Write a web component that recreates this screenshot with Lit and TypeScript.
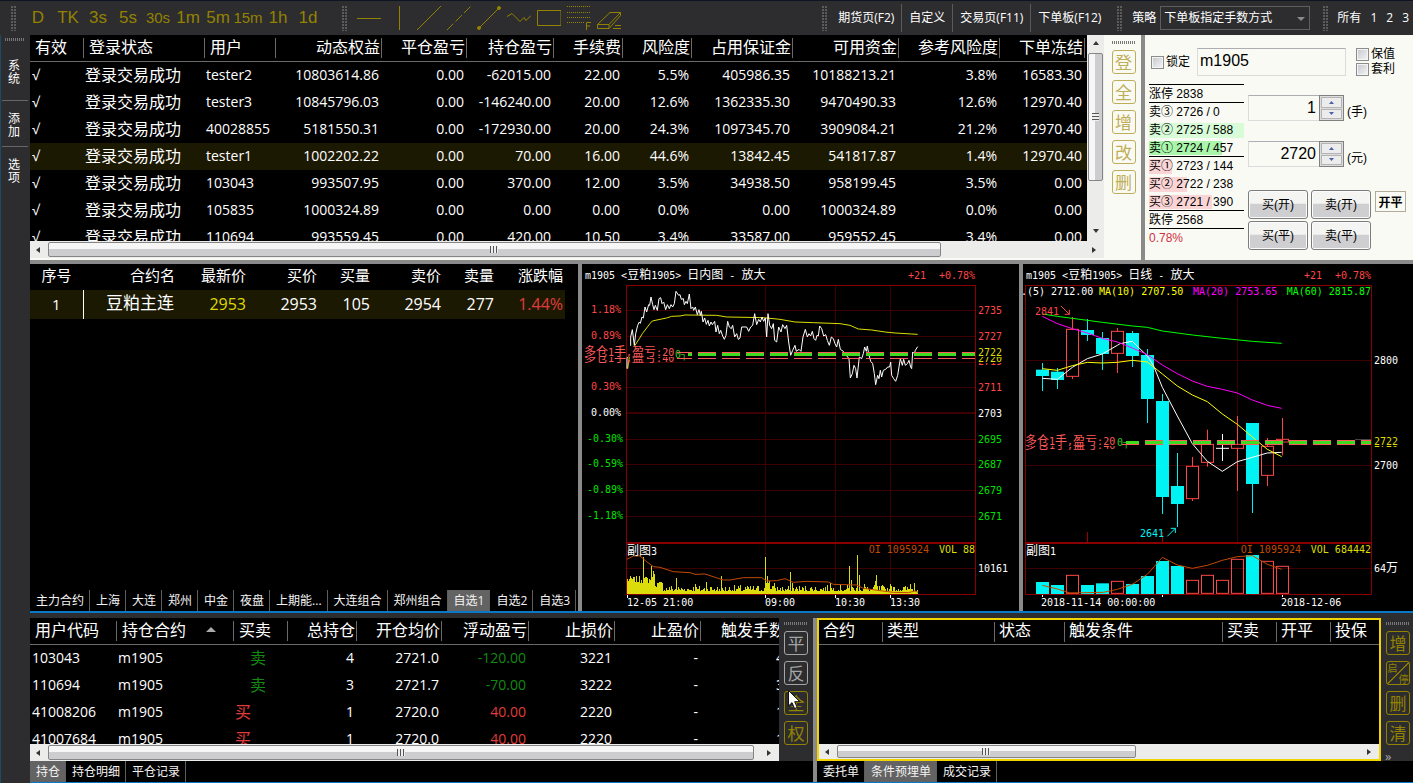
import { LitElement, html, svg, css, nothing } from "lit";
import { customElement, property } from "lit/decorators.js";
import { classMap } from "lit/directives/class-map.js";

const UI_FONT = css`"Open Sans", "Noto Sans CJK SC", sans-serif`;

const gridStyles = css`
  table { border-collapse: collapse; table-layout: fixed; width: 100%; color: #fff; }
  th, td { padding: 0; font-weight: 400; overflow: hidden; white-space: nowrap; text-align: left; }
  .num { text-align: right; }
  .red { color: #e03c3c; }
  .green { color: #128a12; }
  .yellow { color: #ded800; }
`;

interface Column {
  title: string;
  width?: number;
  num?: boolean;
  sorted?: boolean;
}

type Cell = string | { text: string; tone?: string; indent?: boolean };

/* Data grid with separated header cells, used for accounts, positions and conditional orders. */
@customElement("data-grid")
class DataGrid extends LitElement {
  static styles = [gridStyles, css`
    :host { display: block; overflow: hidden; background: #000; min-width: 0; font-family: ${UI_FONT}; }
    thead tr { height: 26px; }
    :host([compact]) thead tr { height: 24px; }
    thead { border-bottom: 1px solid #6a6a6a; }
    th { font-size: 16px; line-height: 18px; }
    .head { display: flex; align-items: center; justify-content: space-between; box-sizing: border-box; height: 20px; padding: 0 1px 2px 5px; border-right: 1px solid #6a6a6a; }
    :host([compact]) .head { padding: 0 1px 4px 4px; }
    .num .head { justify-content: flex-end; }
    .last .head { border-right-color: transparent; }
    .sort { width: 0; height: 0; margin-right: 16px; border: 5px solid transparent; border-top: 0; border-bottom-color: #aaa; }
    tbody tr { height: 27px; }
    td { font-size: 14px; line-height: 26px; height: 27px; padding: 0 3px 0 1px; }
    td:first-child { padding-left: 2px; }
    .cjk { font-size: 16px; }
    .indent { padding-left: 16px; }
    .selected { background: #1c1903; }
  `];
  @property({ attribute: false }) columns: Column[] = [];
  @property({ attribute: false }) rows: Cell[][] = [];
  @property({ type: Number }) selected = -1;
  @property({ type: Boolean, reflect: true }) compact = false;

  render() {
    return html`<table>
      <colgroup>${this.columns.map(c => html`<col width=${c.width ?? nothing}>`)}</colgroup>
      <thead><tr>${this.columns.map(c => html`
        <th scope="col" class=${classMap({ num: !!c.num, last: !c.width })}>
          <div class="head">${c.title}${c.sorted ? html`<span class="sort"></span>` : nothing}</div>
        </th>`)}</tr></thead>
      <tbody>${this.rows.map((r, i) => html`<tr class=${classMap({ selected: i === this.selected })}>
        ${r.map((cell, j) => {
          const c = typeof cell === "string" ? { text: cell } : cell as any;
          const cjk = /[\u4e00-\u9fff]/.test(c.text);
          return html`<td class=${classMap({ num: !!this.columns[j].num, cjk, indent: !!c.indent, red: c.tone === "red", green: c.tone === "green" })}>${c.text}</td>`;
        })}</tr>`)}</tbody>
    </table>`;
  }
}

/* Window-style scroll bar: len is the thumb's share of the track, in percent. */
@customElement("scroll-bar")
class ScrollBar extends LitElement {
  static styles = css`
    :host { display: flex; background: #ececea; flex: none; height: 17px; }
    :host([vertical]) { flex-direction: column; width: 17px; height: auto; }
    .arrow { border: 0; padding: 0; background: none; width: 18px; height: 100%; display: flex; align-items: center; justify-content: center; flex: none; }
    :host([vertical]) .arrow { width: 100%; height: 18px; }
    .track { flex: 1; display: flex; min-width: 0; min-height: 0; }
    :host([vertical]) .track { flex-direction: column; }
    .thumb { box-sizing: border-box; border: 1px solid #858585; border-radius: 2px; margin: 1px 0; display: flex; align-items: center; justify-content: center; background: linear-gradient(#f6f6f6 0 45%, #cdcdcf 50% 100%); }
    :host([vertical]) .thumb { margin: 0 1px; background: linear-gradient(90deg, #f6f6f6 0 45%, #cdcdcf 50% 100%); }
    .ribs { width: 8px; height: 7px; background: repeating-linear-gradient(90deg, #555 0 1px, #eee 1px 3px); }
    :host([vertical]) .ribs { width: 7px; height: 8px; background: repeating-linear-gradient(#555 0 1px, #eee 1px 3px); }
  `;
  @property({ type: Boolean, reflect: true }) vertical = false;
  @property({ type: Number }) len = 50;

  render() {
    const [a, b] = this.vertical ? ["M0 4 3 0 6 4Z", "M0 0 3 4 6 0Z"] : ["M4 0 0 3 4 6Z", "M0 0 4 3 0 6Z"];
    const arrow = (d: string, label: string) => html`<button class="arrow" aria-label=${label}>
      <svg width="6" height="6" viewBox="0 0 6 6"><path d=${d} fill="#333" /></svg></button>`;
    return html`${arrow(a, "向前滚动")}
      <div class="track"><div class="thumb" style="flex-basis:${this.len}%"><span class="ribs"></span></div></div>
      ${arrow(b, "向后滚动")}`;
  }
}

/* Vertical strip of framed one-character command buttons. */
@customElement("tool-strip")
class ToolStrip extends LitElement {
  static styles = css`
    :host { display: flex; flex-direction: column; align-items: center; gap: 6px; padding-top: 4px; box-sizing: border-box; background: #2d2d2f; flex: none; font-family: ${UI_FONT}; --c: #938200; }
    :host([light]) { background: #fafaf4; padding-top: 6px; --c: #bfae58; }
    .grip { width: 24px; height: 3px; background: repeating-linear-gradient(90deg, #777 0 1px, transparent 1px 2px); }
    button { box-sizing: border-box; width: 24px; height: 24px; padding: 0; border: 1px solid var(--c); border-radius: 3px; background: none; color: var(--c); font: 17px/20px "Noto Sans CJK SC", sans-serif; display: grid; place-items: center; }
    .grey { --c: #a5a5a5; }
    .pair { grid-template: 11px 11px / 11px 11px; font-size: 10px; line-height: 11px; background: linear-gradient(135deg, transparent 48%, var(--c) 49% 52%, transparent 53%); }
    .pair span:last-child { grid-area: 2 / 2; }
    .more { color: #aaa; font-size: 13px; line-height: 10px; align-self: flex-start; padding-left: 2px; }
  `;
  @property({ attribute: false }) items: { text: string; grey?: boolean }[] = [];
  @property({ type: Boolean }) more = false;

  render() {
    return html`<span class="grip"></span>
      ${this.items.map(i => i.text.length > 1
        ? html`<button class="pair"><span>${i.text[0]}</span><span>${i.text[1]}</span></button>`
        : html`<button class=${i.grey ? "grey" : ""}>${i.text}</button>`)}
      ${this.more ? html`<span class="more">»</span>` : nothing}`;
  }
}

@customElement("tab-bar")
class TabBar extends LitElement {
  static styles = css`
    :host { display: flex; flex: none; height: 21px; background: #000; font-family: ${UI_FONT}; overflow: hidden; }
    button { border: 0; border-right: 1px solid #5e5e5e; background: none; color: #f4f4f4; padding: 0 5px 0 6px; font: 12px/20px ${UI_FONT}; white-space: nowrap; }
    .on { background: #636363; }
  `;
  @property({ attribute: false }) tabs: string[] = [];
  @property({ type: Number }) active = 0;
  render() {
    return this.tabs.map((t, i) => html`<button class=${i === this.active ? "on" : ""}>${t}</button>`);
  }
}

const chartStyles = css`
  :host { display: block; background: #000; min-width: 0; min-height: 0; overflow: hidden; }
  svg { display: block; width: 100%; height: 100%; }
  text { font: 10px "DejaVu Sans Mono", "Noto Sans CJK SC", monospace; white-space: pre; }
  .cjk { font-size: 12px; }
`;

const RED = "#ff4646", GREEN = "#00e000", YELLOW = "#dede00", ORANGE = "#c24a00", CYAN = "#00f3f3";

const label = (s: string, x: number, y: number, fill = "#fff", anchor = "start") => svg`
  <text x=${x} y=${y + 4} fill=${fill} text-anchor=${anchor}>${s.split(/([\u4e00-\u9fff]+)/).filter(Boolean).map(p =>
    /[\u4e00-\u9fff]/.test(p) ? svg`<tspan class="cjk">${p}</tspan>` : p)}</text>`;
const hline = (x1: number, x2: number, y: number, c: string, w = 1, dash = "") =>
  svg`<path d="M${x1} ${y}H${x2}" stroke=${c} stroke-width=${w} stroke-dasharray=${dash || "none"} />`;
const vline = (x: number, y1: number, y2: number, c: string, w = 1) =>
  svg`<path d="M${x} ${y1}V${y2}" stroke=${c} stroke-width=${w} />`;
const curve = (pts: string, c: string) =>
  svg`<polyline points=${pts} fill="none" stroke=${c} stroke-width="3" />`;

const DARK = "#3c0000", FRAME = "#8a0000";

@customElement("intraday-chart")
class IntradayChart extends LitElement {
  static styles = chartStyles;

  private price = "141,320 141,290 152,250 152,225 157,203 163,250 167,215 173,190 178,180 181,184 186,165 190,168 195,135 200,150 206,128 209,130 213,105 218,128 222,143 226,130 232,145 237,110 242,107 246,125 251,120 257,143 262,128 268,140 273,128 278,135 283,125 288,88 296,100 300,98 304,112 310,110 313,128 318,118 322,125 328,96 333,140 338,135 341,145 346,135 352,158 357,143 361,160 364,148 369,180 374,168 379,187 384,175 388,192 393,180 397,188 404,178 408,210 413,190 418,215 422,205 428,222 433,232 438,220 443,178 448,195 454,200 458,190 464,225 470,215 475,232 480,228 485,195 500,195 506,208 512,195 518,190 524,155 530,188 536,172 541,180 546,165 551,178 556,168 560,225 564,155 569,190 575,200 580,185 584,235 590,240 596,195 603,210 608,188 615,200 620,190 626,240 632,280 638,265 645,250 649,268 657,262 663,268 669,225 676,202 682,225 687,215 692,222 697,208 702,230 707,235 711,220 715,222 719,192 725,200 731,222 737,218 742,235 748,250 754,225 760,230 765,245 770,255 775,232 781,262 790,268 795,275 803,285 807,290 811,348 817,335 822,310 827,320 831,348 838,285 845,290 850,275 854,255 859,268 862,252 866,275 872,298 878,305 883,335 887,368 893,340 897,350 901,325 905,345 910,325 917,322 923,315 929,315 932,300 935,340 941,350 947,358 953,340 961,290 967,310 971,292 976,310 982,305 987,295 992,315 995,320 998,270 1003,275 1006,265 1013,254";
  private average = "143,320 150,270 165,250 178,230 187,215 200,198 210,185 217,177 240,172 260,168 275,163 300,162 315,159 410,160 440,165 550,167 600,172 645,180 700,182 780,185 810,190 835,201 875,204 915,210 945,213 995,216 1013,217";
  private openInterest = "141,388 160,378 180,378 200,395 220,410 240,412 280,425 330,428 345,433 375,432 430,450 450,450 490,443 545,443 560,453 590,452 615,446 640,457 680,454 745,456 760,463 830,465 850,475 900,482 940,487 985,488 1005,483 1014,487";

  private volumes(): number[] {
    const spikes: Record<number, number> = { 16: 37, 24: 28, 26: 23, 27: 20, 49: 16, 68: 10, 79: 12, 94: 18, 138: 37, 140: 18, 142: 13, 147: 11, 163: 22, 165: 11, 203: 11, 222: 28, 224: 14, 230: 39, 232: 19, 237: 10, 248: 13, 249: 19, 263: 10, 283: 10, 287: 11 };
    let seed = 7;
    return Array.from({ length: 291 }, (_, i) => {
      seed = (seed * 1103515245 + 12345) % 2147483648;
      const r = seed / 2147483648;
      const h = i < 27 ? 11 + r * 7 : i < 36 ? 7 + r * 6 : i > 137 && i < 142 ? 10 + r * 4 : 3 + r * r * 6;
      return Math.round(Math.max(h, spikes[i] ?? 0));
    });
  }

  render() {
    const ys = [310, 336, 362, 387, 439, 464, 490, 516, 568];
    const bars = this.volumes().map((h, i) => `M${627 + i}.5 594V${594 - h}`).join("");
    return html`<svg viewBox="582 264 437 347" preserveAspectRatio="xMinYMid meet" role="img" aria-label="m1905 日内图">
      ${label("m1905 <豆粕1905> 日内图 - 放大", 585, 275)}
      ${label("+21", 908, 275, RED)}${label("+0.78%", 975, 275, RED, "end")}
      ${ys.map(y => hline(626, 976, y + 0.5, DARK))}
      ${hline(626, 976, 413, DARK, 2)}
      ${[765.5, 835.5, 890.5].map(x => svg`${vline(x, 286, 594, DARK)}${vline(x, 595, 598, "#fff")}`)}
      ${vline(627.5, 595, 598, "#fff")}
      <path d=${bars} stroke="#dcdc0a" />
      <rect x="626.5" y="285.5" width="349" height="309" fill="none" stroke=${FRAME} />
      ${hline(626, 976, 543, FRAME, 2)}
      <g transform="translate(580 430) scale(.33333)">${curve(this.openInterest, ORANGE)}</g>
      <g transform="translate(580 262) scale(.33333)">${curve(this.average, YELLOW)}${curve(this.price, "#fff")}</g>
      ${label("多仓1手,盈亏:40", 584, 358, "#ff5a5a")}
      <rect x="584" y="346" width="92" height="11" fill="#000" />
      ${vline(626.5, 346, 357, FRAME)}
      ${label("多仓1手,盈亏:20", 584, 352, "#ff5a5a")}
      ${label("0┐", 675, 354, "#30c820")}
      ${hline(677, 692, 352.5, "#ff5a5a")}${hline(677, 692, 358.5, "#ff5a5a")}
      ${hline(688, 692, 354.5, "#3ddc20", 3)}
      ${hline(698, 975, 352.5, "#ff5a5a", 1, "18 6")}
      ${hline(698, 975, 354.5, "#3ddc20", 3, "18 6")}
      ${hline(698, 975, 358.5, "#ff5a5a", 1, "18 6")}
      ${[["1.18%", 309], ["0.89%", 335], ["0.30%", 386]].map(([t, y]) => label(t as string, 621, y as number, RED, "end"))}
      ${label("0.00%", 621, 412, "#fff", "end")}
      ${[["-0.30%", 438], ["-0.59%", 463], ["-0.89%", 489], ["-1.18%", 515]].map(([t, y]) => label(t as string, 623, y as number, GREEN, "end"))}
      ${[[2735, 310], [2727, 336], [2711, 387]].map(([t, y]) => label(String(t), 978, y, RED))}
      ${label("2719", 978, 361, RED)}
      <rect x="978" y="354" width="26" height="9" fill="#000" />
      ${label("2720", 978, 358, YELLOW)}
      <rect x="978" y="346" width="26" height="11" fill="#000" />
      ${label("2722", 978, 352, YELLOW)}
      ${label("2703", 978, 413)}
      ${[[2695, 439], [2687, 464], [2679, 490], [2671, 516]].map(([t, y]) => label(String(t), 978, y, GREEN))}
      ${label("10161", 978, 568)}
      ${label("副图3", 627, 551)}
      ${label("OI 1095924", 929, 549, ORANGE, "end")}${label("VOL 88", 975, 549, YELLOW, "end")}
      ${label("12-05 21:00", 627, 602)}${label("09:00", 765, 602)}${label("10:30", 835, 602)}${label("13:30", 890, 602)}
    </svg>`;
  }
}

/* kind: c = falling (filled), r = rising (hollow), w = flat */
const CANDLES: [string, number, number, number, number, number][] = [
  ["c", 323, 342, 303, 387, 456], ["c", 329, 354, 318, 381, 465], ["r", 202, 343, 165, 351, 436],
  ["c", 204, 219, 171, 237, 465], ["c", 228, 276, 210, 324, 460], ["r", 208, 274, 198, 333, 454],
  ["c", 213, 282, 207, 315, 462], ["c", 279, 411, 261, 483, 438], ["c", 417, 705, 396, 756, 393],
  ["c", 672, 726, 573, 795, 408], ["r", 613, 710, 585, 717, 451], ["r", 547, 601, 503, 614, 436],
  ["w", 559, 559, 516, 597, 451], ["r", 547, 559, 462, 687, 388], ["c", 483, 666, 483, 753, 375],
  ["r", 553, 640, 528, 672, 394], ["r", 532, 540, 468, 580, 409],
];

@customElement("daily-chart")
class DailyChart extends LitElement {
  static styles = chartStyles;

  private candle([kind, top, bottom, high, low]: (typeof CANDLES)[number], i: number) {
    const x = 67.5 + i * 45;
    if (kind === "c") return svg`<path d="M${x} ${high}V${low}" stroke=${CYAN} stroke-width="3" />
      <rect x=${x - 19.5} y=${top} width="39" height=${bottom - top} fill=${CYAN} />`;
    if (kind === "w") return svg`<path d="M${x} ${high}V${low}M${x - 19.5} ${top}h39" stroke="#fff" stroke-width="3" />`;
    return svg`<path d="M${x} ${high}V${top}M${x} ${bottom}V${low}" stroke=${RED} stroke-width="3" />
      <rect x=${x - 18} y=${top} width="36" height=${bottom - top} fill="none" stroke=${RED} stroke-width="3" />`;
  }

  private volume([kind, , , , , top]: (typeof CANDLES)[number], i: number) {
    const x = 67.5 + i * 45;
    return kind === "c"
      ? svg`<rect x=${x - 19.5} y=${top} width="39" height=${492 - top} fill=${CYAN} />`
      : svg`<rect x=${x - 18} y=${top} width="36" height=${490 - top} fill="none" stroke=${RED} stroke-width="3" />`;
  }

  render() {
    return html`<svg viewBox="1023 264 390 347" preserveAspectRatio="xMinYMid meet" role="img" aria-label="m1905 日线">
      ${label("m1905 <豆粕1905> 日线 - 放大", 1026, 275)}
      ${label("+21", 1304, 275, RED)}${label("+0.78%", 1371, 275, RED, "end")}
      ${[360.5, 465.5, 568.5].map(y => hline(1025, 1372, y, DARK))}
      ${vline(1237.5, 297, 542, DARK)}
      <rect x="1025.5" y="285.5" width="346" height="309" fill="none" stroke=${FRAME} />
      ${hline(1025, 1372, 543, FRAME, 2)}
      ${[1087.5, 1162.5].map(x => vline(x, 532, 542, "#9a0000"))}
      ${label(".(5) 2712.00", 1021, 291)}
      ${label("MA(10) 2707.50", 1099, 291, "#ffff00")}
      ${label("MA(20) 2753.65", 1193, 291, "#ff00ff")}
      ${label("MA(60) 2815.87", 1371, 291, "#00ff00", "end")}
      <g transform="translate(1020 262) scale(.33333)">
        ${CANDLES.map((c, i) => this.candle(c, i))}
        ${curve("67,349 112,352 157,316 202,290 247,276 292,250 300,245 337,238 382,282 400,310 427,376 472,462 517,545 562,598 607,628 652,599 697,586 742,573 785,571", "#fff")}
        ${curve("67,320 112,325 157,311 202,301 247,303 292,301 337,295 382,300 427,336 472,372 517,399 562,419 607,456 652,487 697,525 742,562 785,584", "#ffff00")}
        ${curve("67,163 110,184 157,200 202,213 247,229 292,240 337,258 382,278 427,309 472,335 517,357 562,373 607,382 652,393 697,414 742,430 785,439", "#ff00ff")}
        ${curve("67,156 112,163 157,169 247,181 337,192 382,196 427,207 517,219 607,229 697,238 785,244", "#00ff00")}
        <path d="M123 132 148 157M148 143V157H134" fill="none" stroke=${RED} stroke-width="3" />
        <path d="M442 823 466 799M452 799H466V813" fill="none" stroke=${CYAN} stroke-width="3" />
      </g>
      <g transform="translate(1020 430) scale(.33333)">
        ${CANDLES.map((c, i) => this.volume(c, i))}
        ${curve("67,466 112,477 150,489 250,487 292,478 337,463 382,433 427,382 472,405 517,415 562,406 607,391 652,380 697,377 742,403 785,418", ORANGE)}
      </g>
      ${label("2841", 1035, 311, RED)}${label("2641", 1140, 533, CYAN)}
      ${hline(1355, 1371, 439.5, "#444")}
      ${label("多仓1手,盈亏:40", 1025, 445, "#ff5a5a")}
      <rect x="1026" y="434" width="90" height="12" fill="#000" />
      ${label("多仓1手,盈亏:20", 1025, 441, "#ff5a5a")}
      ${label("0┐", 1117, 442, "#30c820")}
      ${hline(1122, 1139, 444.5, "#ff5a5a")}${hline(1126, 1139, 442.5, "#3ddc20", 3)}
      ${hline(1145, 1371, 441, "#ff5a5a", 2, "18 6")}
      ${hline(1145, 1371, 442.5, "#3ddc20", 3, "18 6")}
      ${hline(1145, 1371, 444.5, "#ff5a5a", 1, "18 6")}
      ${label("2800", 1374, 360)}
      ${label("2720", 1374, 443, YELLOW)}
      <rect x="1373" y="435" width="27" height="11" fill="#000" />
      ${label("2722", 1374, 441, YELLOW)}
      ${label("2700", 1374, 465)}${label("64万", 1374, 568)}
      ${label("副图1", 1026, 551)}
      ${label("OI 1095924", 1301, 549, ORANGE, "end")}${label("VOL 684442", 1371, 549, YELLOW, "end")}
      ${[1042.5, 1162.5, 1282.5].map(x => vline(x, 595, 597, "#fff"))}
      ${label("2018-11-14 00:00:00", 1041, 602)}${label("2018-12-06", 1281, 602)}
    </svg>`;
  }
}

@customElement("quote-board")
class QuoteBoard extends LitElement {
  static styles = [gridStyles, css`
    :host { display: flex; flex-direction: column; background: #000; min-width: 0; overflow: hidden; font-family: ${UI_FONT}; }
    .body { flex: 1; }
    table { width: auto; }
    th { box-sizing: border-box; font-size: 15px; line-height: 20px; height: 26px; padding: 0 2px 5px 0; }
    td { box-sizing: border-box; font-size: 16px; line-height: 28px; height: 29px; padding-right: 2px; vertical-align: top; }
    .mid { text-align: center; padding-right: 0; }
    td.mid { border-right: 1px solid #fff; font-size: 15px; }
    tbody tr { height: 29px; background: #1c1903; }
    td.name { font-size: 17px; line-height: 25px; padding-right: 3px; }
  `];
  render() {
    const cols = [53, 94, 71, 71, 53, 71, 53, 69];
    return html`<div class="body"><table>
        <colgroup>${cols.map(w => html`<col width=${w}>`)}</colgroup>
        <thead><tr><th class="mid">序号</th>${["合约名", "最新价", "买价", "买量", "卖价", "卖量", "涨跌幅"].map(t => html`<th class="num">${t}</th>`)}</tr></thead>
        <tbody><tr><td class="mid">1</td><td class="num name">豆粕主连</td><td class="num yellow">2953</td><td class="num">2953</td>
          <td class="num">105</td><td class="num">2954</td><td class="num">277</td><td class="num red">1.44%</td></tr></tbody>
      </table></div>
      <tab-bar .active=${9} .tabs=${["主力合约", "上海", "大连", "郑州", "中金", "夜盘", "上期能...", "大连组合", "郑州组合", "自选1", "自选2", "自选3"]}></tab-bar>`;
  }
}

@customElement("order-pad")
class OrderPad extends LitElement {
  static styles = css`
    :host { display: block; box-sizing: border-box; flex: none; width: 268px; padding: 13px 8px 0 4px; background: #fafaf4; color: #000; font: 12px/15px "Liberation Sans", "Noto Sans CJK SC", sans-serif; overflow: hidden; }
    label { display: flex; align-items: center; gap: 2px; white-space: nowrap; }
    input[type="checkbox"] { appearance: none; box-sizing: border-box; width: 13px; height: 13px; margin: 0; border: 1px solid #8c8c8c; background: linear-gradient(135deg, #c4c6cc, #f6f6f6); box-shadow: inset 0 0 0 1px #f4f4f4; }
    .field { box-sizing: border-box; border: 1px solid #dcdcdc; border-top-color: #adadb3; background: #fafaf4; font: 16px/20px "Liberation Sans", sans-serif; color: #000; }
    .top { display: flex; align-items: center; height: 28px; padding-left: 2px; }
    .code { width: 149px; height: 28px; margin: 0 10px 0 7px; padding: 0 2px 3px; min-width: 0; }
    .flags { display: flex; flex-direction: column; }
    .main { display: flex; gap: 4px; padding-top: 8px; }
    .ladder { width: 95px; flex: none; border-top: 1px solid #000; }
    .level { position: relative; height: 18px; line-height: 18px; box-sizing: border-box; white-space: nowrap; }
    .rule { border-bottom: 1px solid #000; }
    .bar { position: absolute; left: 0; top: 2px; bottom: 1px; }
    .text { position: relative; }
    .ask2 { background: #d8fcd8; } .ask1 { background: #a9f5a9; } .bid { background: #fbd5d5; }
    .change { color: #d03040; }
    .side { padding-top: 11px; }
    .spin { display: flex; align-items: center; height: 26px; margin-bottom: 20px; }
    .spin label { padding-top: 8px; }
    .qty { width: 71px; height: 26px; text-align: right; padding: 0 3px; border-right: 0; }
    .steps { display: grid; grid-template-rows: 1fr 1fr; gap: 1px; box-sizing: border-box; width: 25px; height: 26px; padding: 1px; margin-right: 3px; border: 1px solid #808080; background: #ddd; }
    .steps button { border: 1px solid #b4b4b4; padding: 0; background: #ececec; display: grid; place-items: center; min-height: 0; }
    .deals { display: grid; grid-template-columns: 60px 60px auto; gap: 2px 3px; margin-top: 23px; align-items: start; }
    .deal { height: 29px; border: 1px solid #7c7c7c; border-radius: 3px; padding: 0; color: #000; font: 12px/20px "Liberation Sans", "Noto Sans CJK SC", sans-serif; background: linear-gradient(#f4f4f2 0 45%, #cfcfd2 50% 100%); box-shadow: inset 0 0 0 1px #fcfcfc; }
    .mode { justify-self: start; height: 21px; width: 31px; margin: 1px 0 0 1px; padding: 0; border: 1px solid #b0ac98; background: #fafaf4; color: #000; font: 700 12px/16px "Noto Sans CJK SC", sans-serif; }
  `;
  private levels: [string, string, string, number, boolean][] = [
    ["涨停", "2838", "", 0, true], ["卖③", "2726 / 0", "", 0, false], ["卖②", "2725 / 588", "ask2", 100, false],
    ["卖①", "2724 / 457", "ask1", 77, true], ["买①", "2723 / 144", "bid", 24, false], ["买②", "2722 / 238", "bid", 40, false],
    ["买③", "2721 / 390", "bid", 66, true], ["跌停", "2568", "", 0, true],
  ];
  private spin(id: string, value: string, unit: string, name: string) {
    const tri = (d: string) => html`<svg width="5" height="3" viewBox="0 0 5 3"><path d=${d} fill="#4a62a8" /></svg>`;
    return html`<div class="spin"><input class="field qty" id=${id} type="text" .value=${value} aria-label=${name}>
      <span class="steps"><button aria-label="增加">${tri("M0 3 2.5 0 5 3Z")}</button><button aria-label="减少">${tri("M0 0 2.5 3 5 0Z")}</button></span>
      <label for=${id}>(${unit})</label></div>`;
  }
  render() {
    return html`<div class="top">
        <label><input type="checkbox">锁定</label>
        <input class="field code" type="text" aria-label="合约" .value=${"m1905"}>
        <div class="flags"><label><input type="checkbox">保值</label><label><input type="checkbox">套利</label></div>
      </div>
      <div class="main">
        <div class="ladder">
          ${this.levels.map(([n, v, c, w, rule]) => html`<div class=${classMap({ level: true, rule })}>
            ${w ? html`<span class="bar ${c}" style="width:${w}%"></span>` : nothing}<span class="text">${n} ${v}</span></div>`)}
          <div class="level change">0.78%</div>
        </div>
        <div class="side">
          ${this.spin("lots", "1", "手", "手数")}${this.spin("price", "2720", "元", "价格")}
          <div class="deals">
            <button class="deal">买(开)</button><button class="deal">卖(开)</button><button class="mode">开平</button>
            <button class="deal">买(平)</button><button class="deal">卖(平)</button>
          </div>
        </div>
      </div>`;
  }
}

@customElement("top-bar")
class TopBar extends LitElement {
  static styles = css`
    :host { display: flex; align-items: center; height: 35px; box-sizing: border-box; background: #2d2d2f; border-top: 1px solid #0d1522; color: #fff; font: 12px/16px ${UI_FONT}; white-space: nowrap; overflow: hidden; }
    button { border: 0; padding: 0; background: none; color: inherit; font: inherit; }
    .grip { width: 5px; height: 25px; flex: none; background: radial-gradient(circle at 1px 1px, #5c5c5c 0 1px, transparent 1px) 0 0 / 3px 3px; }
    .periods { display: flex; margin: 0 19px 0 7px; }
    .first { margin-left: 11px; }
    .periods button { width: 30px; height: 30px; color: #938200; font: 17px/30px "Liberation Sans", sans-serif; }
    .periods .long { font-size: 15px; }
    .tools { display: flex; margin-left: 7px; }
    .tools button { width: 30px; height: 30px; }
    .tools svg { display: block; margin: 3px; }
    .space { flex: 1; }
    .menu { display: flex; margin: 0 16px 0 4px; }
    .menu button { height: 28px; padding: 0 7px; border-right: 1px solid #5a5a5a; }
    .menu button:last-child { border: 0; padding-right: 0; }
    .strategy { display: flex; align-items: center; gap: 4px; margin: 0 13px 0 10px; }
    .pick { position: relative; display: block; }
    .pick::after { content: ""; position: absolute; right: 5px; top: 11px; border: 4px solid transparent; border-top-color: #8a8a8a; border-bottom: 0; }
    select { appearance: none; box-sizing: border-box; width: 150px; height: 24px; padding: 0 18px 0 3px; border: 1px solid #5e5e5e; border-radius: 0; background: #2d2d2f; color: #fff; font: 12px/20px ${UI_FONT}; }
    .groups { display: flex; gap: 9px; margin: 0 4px 0 9px; }
  `;
  private icons = [
    svg`<path d="M0 12.5H24" />`,
    svg`<path d="M12.5 0V24" />`,
    svg`<path d="M0 24 24 0" />`,
    svg`<path d="M0 24 24 0" stroke-dasharray="9 3" />`,
    svg`<path d="M1 23 23 1" /><circle cx="2" cy="22" r="1.5" fill="#938200" /><circle cx="22" cy="2" r="1.5" fill="#938200" />`,
    svg`<path d="M0 10.5 5 7.5 13 15.5 17 11.5 19 14.5 24 9.5" />`,
    svg`<path d="M.5 4.5H24V19.5H.5Z" />`,
    svg`<path d="M0 .5H24M0 6.5H24M0 11.5H24M0 16.5H18" stroke-dasharray="1 1" /><path d="M19.5 24V16.5H24M19.5 20H23" />`,
    svg`<path d="M.5 18.5 13 6.5H23.5V9.5L12 22.5H.5ZM.5 18.5H12M12 22.5V18.5L23.5 6.5M16 22.5H24M18 19.5H24" />`,
  ];
  private names = ["水平线", "垂直线", "线段", "虚线", "连线", "折线", "矩形", "黄金分割", "橡皮擦"];
  render() {
    return html`<span class="grip first"></span>
      <div class="periods">${["D", "TK", "3s", "5s", "30s", "1m", "5m", "15m", "1h", "1d"].map(p =>
        html`<button class=${p.length > 2 ? "long" : ""}>${p}</button>`)}</div>
      <span class="grip"></span>
      <div class="tools">${this.icons.map((p, i) => html`<button aria-label=${this.names[i]}>
        <svg width="24" height="24" viewBox="0 0 24 24" fill="none" stroke="#938200">${p}</svg></button>`)}</div>
      <span class="space"></span>
      <span class="grip"></span>
      <div class="menu">${["期货页(F2)", "自定义", "交易页(F11)", "下单板(F12)"].map(t => html`<button>${t}</button>`)}</div>
      <span class="grip"></span>
      <div class="strategy"><label for="strategy">策略</label>
        <span class="pick"><select id="strategy"><option>下单板指定手数方式</option></select></span></div>
      <span class="grip"></span>
      <div class="groups"><button>所有</button><button>1</button><button>2</button><button>3</button></div>`;
  }
}

const OK = "登录交易成功";
const ACCOUNTS = [
  ["√", OK, "tester2", "10803614.86", "0.00", "-62015.00", "22.00", "5.5%", "405986.35", "10188213.21", "3.8%", "16583.30", ""],
  ["√", OK, "tester3", "10845796.03", "0.00", "-146240.00", "20.00", "12.6%", "1362335.30", "9470490.33", "12.6%", "12970.40", ""],
  ["√", OK, "40028855", "5181550.31", "0.00", "-172930.00", "20.00", "24.3%", "1097345.70", "3909084.21", "21.2%", "12970.40", ""],
  ["√", OK, "tester1", "1002202.22", "0.00", "70.00", "16.00", "44.6%", "13842.45", "541817.87", "1.4%", "12970.40", ""],
  ["√", OK, "103043", "993507.95", "0.00", "370.00", "12.00", "3.5%", "34938.50", "958199.45", "3.5%", "0.00", ""],
  ["√", OK, "105835", "1000324.89", "0.00", "0.00", "0.00", "0.0%", "0.00", "1000324.89", "0.0%", "0.00", ""],
  ["√", OK, "110694", "993559.45", "0.00", "420.00", "10.50", "3.4%", "33587.00", "959552.45", "3.4%", "0.00", ""],
];
const ACCOUNT_COLUMNS: Column[] = [
  { title: "有效", width: 54 }, { title: "登录状态", width: 121 }, { title: "用户", width: 71 },
  { title: "动态权益", width: 106, num: true }, { title: "平仓盈亏", width: 85, num: true },
  { title: "持仓盈亏", width: 87, num: true }, { title: "手续费", width: 69, num: true },
  { title: "风险度", width: 69, num: true }, { title: "占用保证金", width: 101, num: true },
  { title: "可用资金", width: 106, num: true }, { title: "参考风险度", width: 101, num: true },
  { title: "下单冻结", width: 85, num: true }, { title: "" },
];
const sell = { text: "卖", tone: "green", indent: true };
const buy = { text: "买", tone: "red" };
const POSITIONS: Cell[][] = [
  ["103043", "m1905", sell, "4", "2721.0", { text: "-120.00", tone: "green" }, "3221", "-", "4"],
  ["110694", "m1905", sell, "3", "2721.7", { text: "-70.00", tone: "green" }, "3222", "-", "3"],
  ["41008206", "m1905", buy, "1", "2720.0", { text: "40.00", tone: "red" }, "2220", "-", "1"],
  ["41007684", "m1905", buy, "1", "2720.0", { text: "40.00", tone: "red" }, "2220", "-", "1"],
];
const POSITION_COLUMNS: Column[] = [
  { title: "用户代码", width: 87 }, { title: "持仓合约", width: 117, sorted: true }, { title: "买卖", width: 54 },
  { title: "总持仓", width: 69, num: true }, { title: "开仓均价", width: 85, num: true },
  { title: "浮动盈亏", width: 87, num: true }, { title: "止损价", width: 86, num: true },
  { title: "止盈价", width: 86, num: true }, { title: "触发手数", width: 86, num: true },
];
const CONDITION_COLUMNS: Column[] = [
  { title: "合约", width: 64 }, { title: "类型", width: 112 }, { title: "状态", width: 70 },
  { title: "触发条件", width: 158 }, { title: "买卖", width: 54 }, { title: "开平", width: 54 }, { title: "投保" },
];
const chars = (s: string) => [...s].map(text => ({ text }));

@customElement("app-root")
class AppRoot extends LitElement {
  static styles = css`
    :host { display: grid; grid-template: 35px minmax(0, 1fr) / 30px minmax(0, 1fr); min-height: 100vh; box-sizing: border-box; background: #2d2d2f; font-family: ${UI_FONT}; overflow: hidden; }
    top-bar { grid-column: 1 / -1; }
    .rail { border-left: 1px solid #1d4a66; display: flex; flex-direction: column; align-items: center; padding: 3px 2px 0 1px; }
    .rail .grip { width: 20px; height: 3px; background: repeating-linear-gradient(90deg, #777 0 1px, transparent 1px 2px); }
    .rail button { box-sizing: border-box; width: 100%; height: 46px; padding: 0 2px 0 0; border: 0; border-bottom: 1px solid #666; background: none; color: #fff; font: 12px/13px "Noto Sans CJK SC", sans-serif; }
    .rail button:first-of-type { height: 60px; }
    .rail button:last-child { border: 0; }
    .rail span span { display: block; }
    .work { display: flex; flex-direction: column; min-width: 0; }
    .upper { display: flex; height: 225px; flex: none; background: #fafaf4; }
    .accounts { flex: 1; min-width: 0; display: flex; flex-direction: column; padding-bottom: 2px; }
    .accounts-body { flex: 1; min-height: 0; display: flex; }
    .accounts data-grid { flex: 1; }
    .bar { background: #8a8a8a; flex: none; }
    .bar.v { width: 4px; }
    .bar.h { height: 4px; }
    .middle { flex: 1; min-height: 347px; display: grid; grid-template: minmax(0, 1fr) / 548fr 4px 437fr 4px 390fr; }
    .blue { flex: none; height: 2px; background: #0a78c8; }
    .lower { flex: none; height: 164px; margin-top: 5px; display: grid; grid-template: minmax(0, 1fr) / minmax(0, 783fr) 4px minmax(0, 596fr); border-bottom: 1px solid #0a78c8; }
    .group { display: flex; flex-direction: column; min-width: 0; }
    .group-body { flex: 1; min-height: 0; display: flex; }
    .pane { flex: 1; min-width: 0; display: flex; flex-direction: column; background: #000; }
    .pane data-grid { flex: 1; min-height: 0; }
    .active { border: 2px solid #f2d500; }
    .active scroll-bar { height: 15px; }
    .account-tools { width: 37px; padding-left: 2px; }
    .pos-tools { width: 34px; }
    .cond-tools { width: 32px; padding-left: 2px; }
    .tools-wrap { position: relative; display: flex; }
    .cursor { position: absolute; left: 9px; top: 72px; pointer-events: none; }
  `;

  render() {
    return html`
      <top-bar></top-bar>
      <nav class="rail"><span class="grip"></span>
        ${["系统", "添加", "选项"].map(t => html`<button aria-label=${t}><span>${[...t].map(c => html`<span>${c}</span>`)}</span></button>`)}
      </nav>
      <div class="work">
        <div class="upper">
          <div class="accounts">
            <div class="accounts-body">
              <data-grid .columns=${ACCOUNT_COLUMNS} .rows=${ACCOUNTS} .selected=${3}></data-grid>
              <scroll-bar vertical .len=${75}></scroll-bar>
            </div>
            <scroll-bar .len=${86}></scroll-bar>
          </div>
          <tool-strip light class="account-tools" .items=${chars("登全增改删")}></tool-strip>
          <div class="bar v"></div>
          <order-pad></order-pad>
        </div>
        <div class="bar h"></div>
        <div class="middle">
          <quote-board></quote-board><div class="bar v"></div>
          <intraday-chart></intraday-chart><div class="bar v"></div>
          <daily-chart></daily-chart>
        </div>
        <div class="blue"></div>
        <div class="lower">
          <div class="group">
            <div class="group-body">
              <div class="pane">
                <data-grid .columns=${POSITION_COLUMNS} .rows=${POSITIONS}></data-grid>
                <scroll-bar .len=${99}></scroll-bar>
              </div>
              <div class="tools-wrap">
                <tool-strip class="pos-tools" .items=${[{ text: "平", grey: true }, { text: "反", grey: true }, { text: "全" }, { text: "权" }]}></tool-strip>
                <svg class="cursor" width="13" height="20" viewBox="0 0 13 20"><path d="M.5.5V16L4 12.6 6.6 18.6 9.2 17.4 6.7 11.7H11.8Z" fill="#fff" stroke="#111" /></svg>
              </div>
            </div>
            <tab-bar .tabs=${["持仓", "持仓明细", "平仓记录"]}></tab-bar>
          </div>
          <div class="bar v"></div>
          <div class="group">
            <div class="group-body">
              <div class="pane active">
                <data-grid compact .columns=${CONDITION_COLUMNS}></data-grid>
                <scroll-bar .len=${57}></scroll-bar>
              </div>
              <tool-strip class="cond-tools" .more=${true} .items=${[{ text: "增" }, { text: "启停" }, { text: "删" }, { text: "清" }]}></tool-strip>
            </div>
            <tab-bar .active=${1} .tabs=${["委托单", "条件预埋单", "成交记录"]}></tab-bar>
          </div>
        </div>
      </div>`;
  }
}
